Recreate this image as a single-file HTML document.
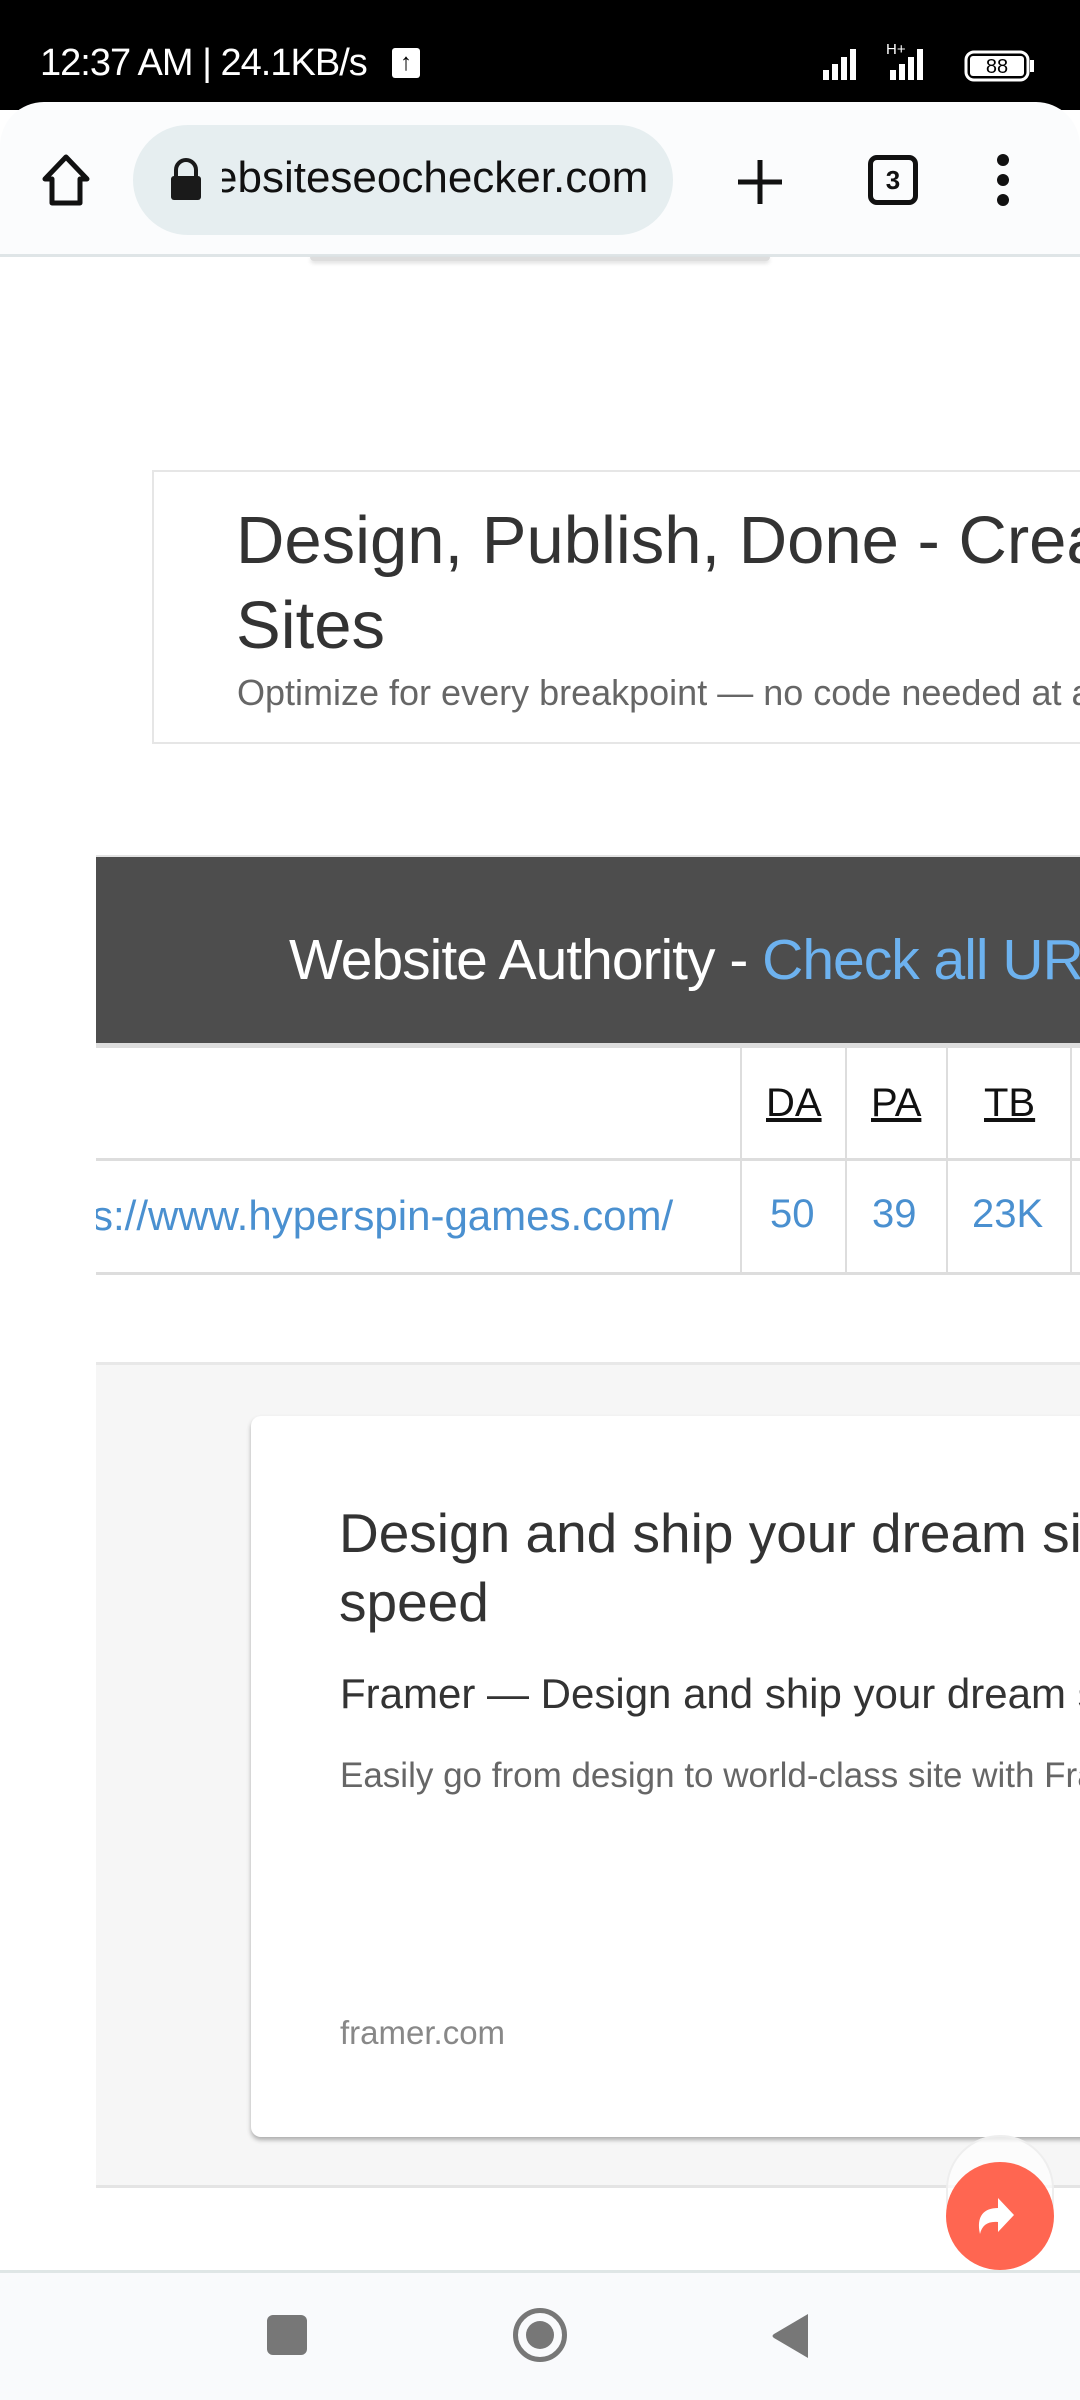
<!DOCTYPE html>
<html><head><meta charset="utf-8"><style>
*{margin:0;padding:0;box-sizing:border-box}
html,body{width:1080px;height:2400px;overflow:hidden;background:#fff;font-family:"Liberation Sans",sans-serif}
.a{position:absolute;white-space:nowrap}
</style></head><body>
<div class="a" style="left:0;top:0;width:1080px;height:110px;background:#000"></div>
<div class="a" style="left:40px;top:42px;color:#fff;font-size:38px;letter-spacing:-1px">12:37 AM | 24.1KB/s</div>
<div class="a" style="left:392px;top:48px;width:28px;height:30px;background:#fff;border-radius:3px;color:#000;font-size:24px;text-align:center;line-height:30px;font-weight:bold">↑</div>
<svg class="a" style="left:820px;top:40px" width="240" height="46">
<g fill="#fff"><rect x="3" y="30" width="6" height="10"/><rect x="12" y="24" width="6" height="16"/><rect x="21" y="17" width="6" height="23"/><rect x="30" y="9" width="6" height="31"/>
<text x="66" y="14" font-size="15" fill="#fff" font-family="Liberation Sans">H+</text>
<rect x="70" y="30" width="6" height="10"/><rect x="79" y="24" width="6" height="16"/><rect x="88" y="17" width="6" height="23"/><rect x="97" y="9" width="6" height="31"/>
<rect x="146" y="12" width="62" height="28" rx="8" fill="none" stroke="#fff" stroke-width="3"/><rect x="150" y="16" width="54" height="20" rx="3"/><rect x="210" y="20" width="4" height="12"/>
<text x="177" y="33" font-size="20" fill="#000" text-anchor="middle" font-family="Liberation Sans">88</text></g></svg>
<div class="a" style="left:0;top:102px;width:1080px;height:155px;background:#fbfcfd;border-radius:44px 44px 0 0;border-bottom:3px solid #dfe5e7"></div>
<svg class="a" style="left:40px;top:152px" width="52" height="56"><path d="M26 5 L47 27 H40 V51 H12 V27 H5 Z" fill="none" stroke="#111" stroke-width="5" stroke-linejoin="round"/></svg>
<div class="a" style="left:133px;top:125px;width:540px;height:110px;background:#e6eef0;border-radius:55px"></div>
<svg class="a" style="left:168px;top:156px" width="36" height="46"><path d="M8 21 V14 a10 10 0 0 1 20 0 V21" fill="none" stroke="#1a1a1a" stroke-width="4"/><rect x="3" y="20" width="30" height="24" rx="3" fill="#1a1a1a"/></svg>
<div class="a" style="left:222px;top:153px;width:430px;overflow:hidden;font-size:44px;color:#111"><span style="margin-left:-9px">ebsiteseochecker.com</span></div>
<svg class="a" style="left:735px;top:157px" width="50" height="50"><path d="M25 3V47M3 25H47" stroke="#111" stroke-width="5"/></svg>
<div class="a" style="left:868px;top:155px;width:50px;height:50px;border:5px solid #111;border-radius:9px;font-size:26px;font-weight:bold;text-align:center;line-height:40px;color:#111">3</div>
<svg class="a" style="left:990px;top:152px" width="26" height="56"><circle cx="13" cy="8" r="6" fill="#111"/><circle cx="13" cy="28" r="6" fill="#111"/><circle cx="13" cy="48" r="6" fill="#111"/></svg>
<div class="a" style="left:310px;top:257px;width:460px;height:4px;background:#ddd;border-radius:0 0 6px 6px;box-shadow:0 2px 4px rgba(0,0,0,.15)"></div>

<div class="a" style="left:152px;top:470px;width:940px;height:274px;border:2px solid #e6e6e6;overflow:hidden">
<div class="a" style="left:82px;top:26px;font-size:67px;color:#333;line-height:85px">Design, Publish, Done - Create Responsive<br>Sites</div>
<div class="a" style="left:83px;top:200px;font-size:36px;color:#666">Optimize for every breakpoint — no code needed at all</div>
</div>

<div class="a" style="left:96px;top:855px;width:984px;height:2px;background:#e4e4e4"></div>
<div class="a" style="left:96px;top:857px;width:984px;height:186px;background:#4d4d4d;overflow:hidden">
<div class="a" style="left:193px;top:70px;font-size:57px;color:#fff;letter-spacing:-1px">Website Authority - <span style="color:#6db2ef">Check all URLs</span></div></div>
<div class="a" style="left:96px;top:1043px;width:984px;height:5px;background:#ddd"></div>
<div class="a" style="left:96px;top:1158px;width:984px;height:3px;background:#ddd"></div>
<div class="a" style="left:96px;top:1272px;width:984px;height:3px;background:#ddd"></div>
<div class="a" style="left:740px;top:1048px;width:2px;height:224px;background:#ddd"></div>
<div class="a" style="left:845px;top:1048px;width:2px;height:224px;background:#ddd"></div>
<div class="a" style="left:946px;top:1048px;width:2px;height:224px;background:#ddd"></div>
<div class="a" style="left:1070px;top:1048px;width:2px;height:224px;background:#ddd"></div>
<div class="a" style="left:766px;top:1081px;font-size:40px;color:#111;text-decoration:underline">DA</div>
<div class="a" style="left:871px;top:1081px;font-size:40px;color:#111;text-decoration:underline">PA</div>
<div class="a" style="left:984px;top:1081px;font-size:40px;color:#111;text-decoration:underline">TB</div>
<div class="a" style="left:96px;top:1192px;width:640px;overflow:hidden;font-size:42px;color:#4a90d0"><span style="margin-left:-4px">s://www.hyperspin-games.com/</span></div>
<div class="a" style="left:770px;top:1192px;font-size:40px;color:#4a90d0">50</div>
<div class="a" style="left:872px;top:1192px;font-size:40px;color:#4a90d0">39</div>
<div class="a" style="left:972px;top:1192px;font-size:40px;color:#4a90d0">23K</div>

<div class="a" style="left:96px;top:1362px;width:984px;height:826px;background:#f6f6f6;border-top:3px solid #e8e8e8;border-bottom:3px solid #e4e4e4"></div>
<div class="a" style="left:251px;top:1416px;width:860px;height:721px;background:#fff;border-radius:10px;box-shadow:0 3px 5px rgba(0,0,0,.3);overflow:hidden">
<div class="a" style="left:88px;top:83px;font-size:55px;color:#333;line-height:69px">Design and ship your dream site at<br>speed</div>
<div class="a" style="left:89px;top:254px;font-size:42px;color:#333">Framer — Design and ship your dream site</div>
<div class="a" style="left:89px;top:340px;font-size:35px;color:#666">Easily go from design to world-class site with Framer</div>
<div class="a" style="left:89px;top:598px;font-size:33px;color:#888">framer.com</div>
</div>

<div class="a" style="left:946px;top:2135px;width:108px;height:120px;border-radius:54px;background:rgba(255,255,255,.7);border:2px solid #eee"></div>
<div class="a" style="left:946px;top:2162px;width:108px;height:108px;border-radius:54px;background:#ff6651"></div>
<svg class="a" style="left:970px;top:2188px" width="60" height="60"><path d="M10 46 C6 28 14 20 28 20 V10 L44 27 L28 44 V34 C18 33 12 37 10 46 Z" fill="#fff"/></svg>

<div class="a" style="left:0;top:2270px;width:1080px;height:130px;background:#f9fafc;border-top:3px solid #dfe6e6"></div>
<div class="a" style="left:267px;top:2315px;width:40px;height:40px;background:#777;border-radius:6px"></div>
<div class="a" style="left:513px;top:2308px;width:54px;height:54px;border:5px solid #777;border-radius:50%"></div>
<div class="a" style="left:526px;top:2321px;width:28px;height:28px;background:#777;border-radius:50%"></div>
<svg class="a" style="left:768px;top:2312px" width="44" height="48"><path d="M40 2 V46 L6 26 Q3 24 6 22 Z" fill="#777"/></svg>
</body></html>
